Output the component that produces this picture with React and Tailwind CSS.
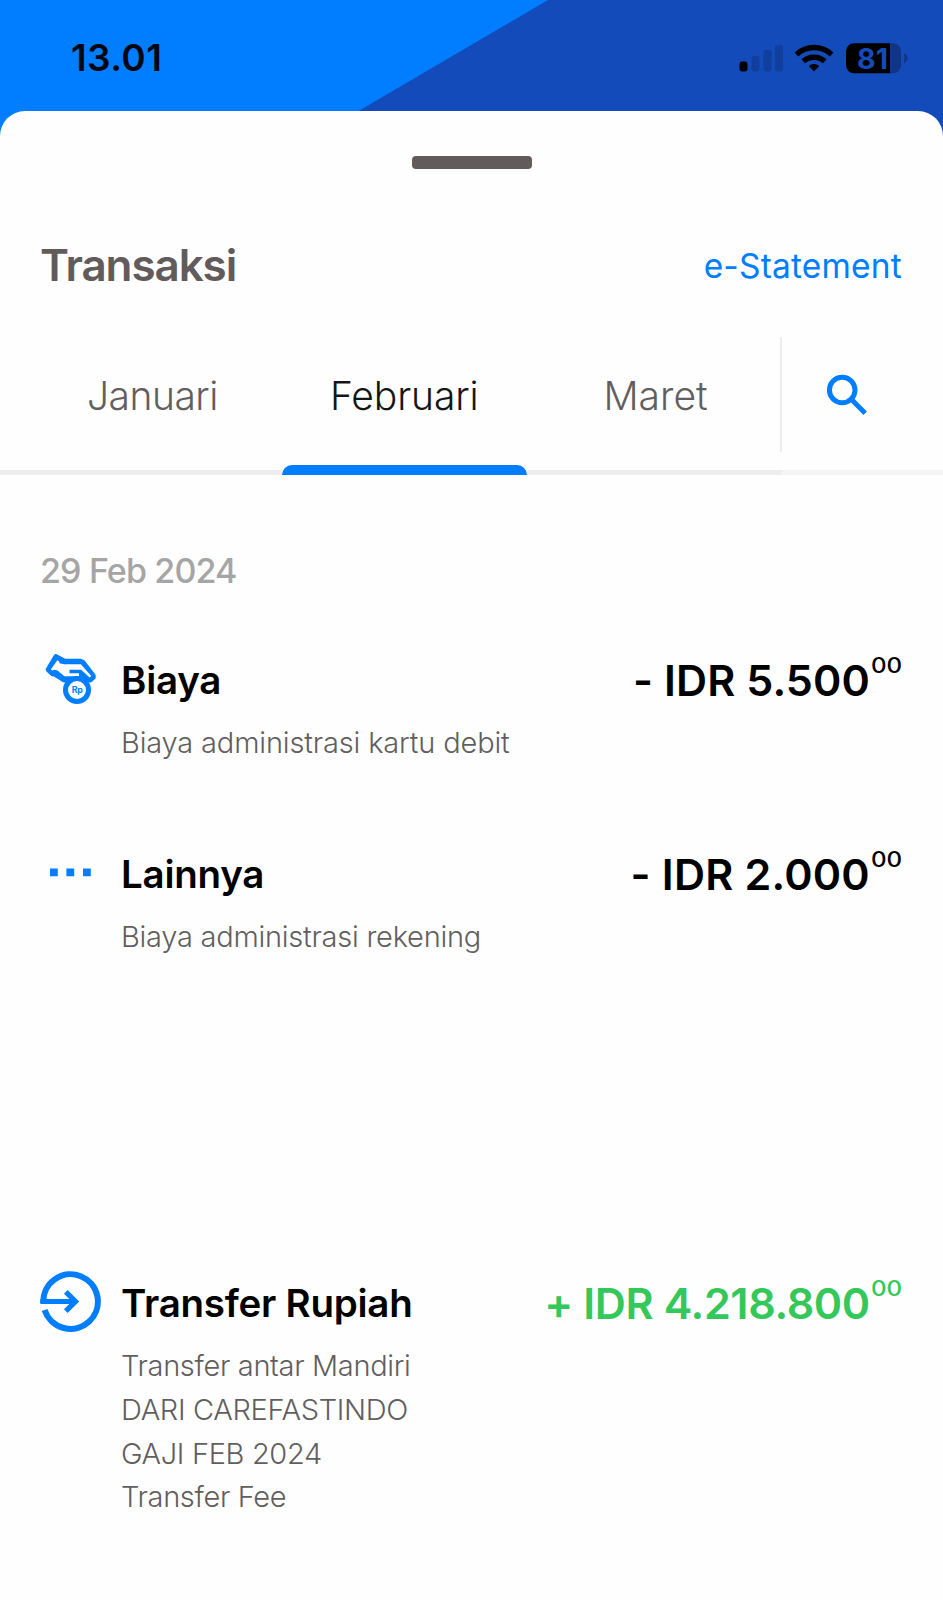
const MONTHS = [
  { label: 'Januari', className: 'w-[282px] pl-[87px] text-[#625e5e] tracking-[-0.5px]' },
  { label: 'Februari', className: 'w-[245px] pl-[48px] text-[#151515] tracking-[-0.1px]' },
  { label: 'Maret', className: 'w-[253px] pl-[76.5px] text-[#625e5e]' },
];

const TRANSACTIONS = [
  {
    title: 'Biaya',
    icon: FeeIcon,
    amount: '- IDR 5.500',
    amountClassName: 'tracking-[0.1px]',
    details: ['Biaya administrasi kartu debit'],
    className: 'h-[194px] tracking-[-0.16px]',
  },
  {
    title: 'Lainnya',
    icon: OtherIcon,
    amount: '- IDR 2.000',
    amountClassName: 'tracking-[0.2px]',
    details: ['Biaya administrasi rekening'],
    className: 'h-[429px] tracking-[-0.25px]',
  },
  {
    title: 'Transfer Rupiah',
    icon: TransferIcon,
    amount: '+ IDR 4.218.800',
    amountClassName: 'tracking-[-0.35px]',
    incoming: true,
    details: ['Transfer antar Mandiri', 'DARI CAREFASTINDO', 'GAJI FEB 2024', 'Transfer Fee'],
    className: 'tracking-[-0.34px]',
  },
];

function FeeIcon() {
  return (
    <svg className="-mt-px" width="60" height="60" viewBox="0 0 60 60">
      <path
        d="M8.2 18.6 16 5.6 24.5 10.3H40.5L43 11.5 53.2 24.8V26.4L50.3 28.9H24L14.5 23 12.5 22.8Z"
        fill="#007eff"
        stroke="#007eff"
        strokeWidth="5"
        strokeLinejoin="round"
      />
      <path
        d="M17.3 9.2 10.8 18.4 12.5 19.6 14.4 18.7 17.5 19.6 24.4 25.2H39V22.3H29.5V18.8H41.2L49.6 26.6 51.3 25 40.8 13.2H24L19.5 12.2 19 10.3Z"
        fill="#fefefe"
      />
      <circle cx="37" cy="39" r="11.5" fill="#fefefe" stroke="#007eff" strokeWidth="5" />
      <text
        x="37.2"
        y="42.2"
        fill="#007eff"
        textAnchor="middle"
        fontSize="8.8"
        fontWeight="700"
        fontFamily="Inter, sans-serif"
      >
        Rp
      </text>
    </svg>
  );
}

function OtherIcon() {
  return (
    <svg className="-mt-px" width="60" height="60" viewBox="0 0 60 60" fill="#007eff">
      <path d="M10 23.4h7.8v7.8H10zM26.4 23.4h7.8v7.8h-7.8zM43 23.4h7.8v7.8H43z" />
    </svg>
  );
}

function TransferIcon() {
  return (
    <svg className="-mt-1" width="62" height="62" viewBox="0 0 62 62" fill="none" stroke="#007eff" strokeWidth="6">
      <path d="M3.3 32A27.3 27.3 0 1 1 4.6 39" />
      <path d="M.4 30.5H35" strokeWidth="5.2" />
      <path d="M25.8 20.8 35.5 30.5 25.8 40.2" strokeWidth="5.2" />
    </svg>
  );
}

function SearchIcon() {
  return (
    <svg width="44" height="44" viewBox="0 0 44 44" fill="none" stroke="#007eff" strokeWidth="5">
      <circle cx="17.2" cy="17" r="12.8" />
      <path d="M26.3 26.3 40.2 40.2" />
    </svg>
  );
}

function StatusBar() {
  return (
    <div className="flex h-[110.5px] items-center justify-between pt-[5px] pl-[71px] pr-[36px]">
      <span className="text-[37px] font-semibold leading-none tracking-[0.4px] text-[#020713]">13.01</span>
      <svg className="mt-0.5" width="172" height="34" viewBox="0 0 172 34" overflow="visible">
        <rect x="4.5" y="19.5" width="8" height="10" rx="2.4" />
        <g fill="#103f9d">
          <rect x="16.5" y="14" width="8" height="15.5" rx="2.4" />
          <rect x="28.5" y="8" width="8" height="21.5" rx="2.4" />
          <rect x="40" y="3" width="8" height="26.5" rx="2.4" />
        </g>
        <g fill="none" stroke="#000" strokeWidth="5.4">
          <path d="M61.4 12.4a26 26 0 0 1 35.2 0" />
          <path d="M68.2 19.3a16.3 16.3 0 0 1 21.6 0" />
        </g>
        <path d="M73.7 24.1a8 8 0 0 1 10.6 0l-5.3 5.3Z" />
        <path d="M119 1.3h36.2v30H119a8 8 0 0 1-8-8v-14a8 8 0 0 1 8-8Z" />
        <path d="M155.2 1.3h2.8a8 8 0 0 1 8 8v14a8 8 0 0 1-8 8h-2.8Z" fill="#103585" />
        <path d="M169.2 11.3q3.4 2 3.4 5t-3.4 5Z" fill="#103585" />
        <text
          x="137.5"
          y="26.6"
          fill="#144bba"
          textAnchor="middle"
          fontSize="28.5"
          fontWeight="700"
          fontFamily="Inter, sans-serif"
        >
          81
        </text>
      </svg>
    </div>
  );
}

function MonthTabs() {
  return (
    <div className="flex h-[139px]">
      {MONTHS.map(({ label, className }) => (
        <button
          key={label}
          type="button"
          className={`flex flex-col text-left text-[39px] font-[330] ${className}`}
        >
          <span className="leading-[118px]">{label}</span>
        </button>
      ))}
      <div className="h-[115px] w-0.5 bg-[#ededed]" />
      <button type="button" className="flex h-[115px] flex-1 items-center pt-[1px] pl-[43px]">
        <SearchIcon />
      </button>
    </div>
  );
}

function Transaction({ title, icon: Icon, amount, amountClassName, incoming, details, className }) {
  return (
    <li className={`flex ${className}`}>
      <div className="w-[81px] shrink-0">
        <Icon />
      </div>
      <div className="min-w-0 flex-1">
        <div className="flex h-14 items-center justify-between">
          <h3 className="whitespace-nowrap pt-px text-[38.5px] font-semibold tracking-[-0.25px] text-black">
            {title}
          </h3>
          <div className={`flex whitespace-nowrap leading-[54px] ${incoming ? 'text-[#34c759]' : 'text-black'}`}>
            <span className={`text-[43px] font-semibold ${amountClassName}`}>{amount}</span>
            <span className="ml-[5px] origin-right scale-x-[1.15] text-[21px] font-medium leading-[26px] tracking-normal">
              00
            </span>
          </div>
        </div>
        <div className="mt-[13px] text-[29px] font-[340] leading-[43.8px] text-[#625e5e]">
          {details.map((line) => (
            <p key={line}>{line}</p>
          ))}
        </div>
      </div>
    </li>
  );
}

export default function App() {
  return (
    <div className="relative h-[1600px] w-[943px] overflow-hidden bg-[#007eff] font-['Inter',sans-serif] [font-feature-settings:'calt'_0]">
      <div className="absolute inset-x-0 top-0 h-[150px] bg-[#144bba] [clip-path:polygon(548px_0,100%_0,100%_100%,292px_100%)]" />
      <div className="relative">
        <StatusBar />
        <main className="h-[1490px] rounded-t-[25px] bg-[#fefefe]">
          <div className="flex h-[124.5px] justify-center pt-[45.5px]">
            <div className="h-[12.5px] w-[120px] rounded-[4px] bg-[#625b5b]" />
          </div>
          <header className="flex h-[60px] items-center justify-between pr-[41px] pl-10">
            <h1 className="text-[44px] font-semibold tracking-[-1.1px] text-[#625b5b]">Transaksi</h1>
            <a className="pt-0.5 text-[33.5px] font-[370] tracking-[0.2px] text-[#007eff]">e-Statement</a>
          </header>
          <div className="mt-[42px]">
            <MonthTabs />
            <div className="-mt-[12px] flex h-[11px] items-end">
              <div className="h-[5px] w-[282px] bg-[#ededed]" />
              <div className="h-2.5 w-[245px] rounded-t-[10px] bg-[#007eff]" />
              <div className="h-[5px] w-[255px] bg-[#ededed]" />
              <div className="h-[5px] flex-1 bg-[#f5f5f5]" />
            </div>
          </div>
          <section className="pt-[76px] pr-[41px] pl-10">
            <h2 className="text-[34px] font-medium leading-10 tracking-[-0.85px] text-[#a5a5a5]">29 Feb 2024</h2>
            <ul className="mt-[61px]">
              {TRANSACTIONS.map((item) => (
                <Transaction key={item.title} {...item} />
              ))}
            </ul>
          </section>
        </main>
      </div>
    </div>
  );
}
